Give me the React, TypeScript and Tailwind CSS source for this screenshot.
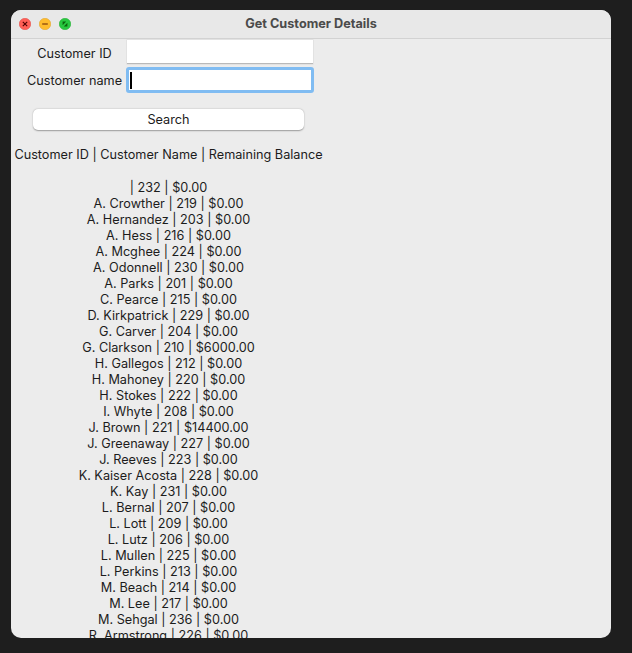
import React from "react";

const rows = [
  "| 232 | $0.00",
  "A. Crowther | 219 | $0.00",
  "A. Hernandez | 203 | $0.00",
  "A. Hess | 216 | $0.00",
  "A. Mcghee | 224 | $0.00",
  "A. Odonnell | 230 | $0.00",
  "A. Parks | 201 | $0.00",
  "C. Pearce | 215 | $0.00",
  "D. Kirkpatrick | 229 | $0.00",
  "G. Carver | 204 | $0.00",
  "G. Clarkson | 210 | $6000.00",
  "H. Gallegos | 212 | $0.00",
  "H. Mahoney | 220 | $0.00",
  "H. Stokes | 222 | $0.00",
  "I. Whyte | 208 | $0.00",
  "J. Brown | 221 | $14400.00",
  "J. Greenaway | 227 | $0.00",
  "J. Reeves | 223 | $0.00",
  "K. Kaiser Acosta | 228 | $0.00",
  "K. Kay | 231 | $0.00",
  "L. Bernal | 207 | $0.00",
  "L. Lott | 209 | $0.00",
  "L. Lutz | 206 | $0.00",
  "L. Mullen | 225 | $0.00",
  "L. Perkins | 213 | $0.00",
  "M. Beach | 214 | $0.00",
  "M. Lee | 217 | $0.00",
  "M. Sehgal | 236 | $0.00",
  "R. Armstrong | 226 | $0.00",
];

function Lights() {
  return (
    <div className="flex items-center gap-[8px] pl-[8px]">
      <svg width="12" height="12" viewBox="0 0 12 12">
        <circle cx="6" cy="6" r="5.75" fill="#ff5f57" stroke="#e0443e" strokeWidth="0.5" />
        <path d="M3.8 3.8 L8.2 8.2 M8.2 3.8 L3.8 8.2" stroke="#4d0000" strokeWidth="1.1" />
      </svg>
      <svg width="12" height="12" viewBox="0 0 12 12">
        <circle cx="6" cy="6" r="5.75" fill="#febc2e" stroke="#dea123" strokeWidth="0.5" />
        <path d="M3.2 6 L8.8 6" stroke="#985712" strokeWidth="1.3" />
      </svg>
      <svg width="12" height="12" viewBox="0 0 12 12">
        <circle cx="6" cy="6" r="5.75" fill="#28c840" stroke="#1aab29" strokeWidth="0.5" />
        <path d="M3.6 3.6 L7.2 3.6 L3.6 7.2 Z M8.4 8.4 L4.8 8.4 L8.4 4.8 Z" fill="#0b650d" />
      </svg>
    </div>
  );
}

export default function App() {
  return (
    <div
      className="w-[632px] h-[653px] bg-[#1e1e1e] pt-[10px] pl-[11px]"
      style={{ fontFamily: "Inter, 'Noto Sans', sans-serif" }}
    >
      <div className="w-[600px] h-[628px] rounded-[10px] overflow-hidden bg-[#ececec] flex flex-col">
        <div className="relative h-[29px] shrink-0 border-b border-[#d2d2d2] bg-[#e8e8e8] flex items-center">
          <Lights />
          <div className="absolute inset-0 flex items-center justify-center text-[12.7px] font-bold text-[#4b4b4b]">
            Get Customer Details
          </div>
        </div>
        <div className="ml-[3px] w-[309px] flex flex-col text-[12.7px] text-[#1c1c1c]">
          <div className="grid grid-cols-[113px_auto] items-center pt-[1px] gap-y-[3px]">
            <div className="text-center pl-[10px] pr-[2px] leading-[16px] pt-[3px]">Customer ID</div>
            <div className="w-[186px] h-[24px] bg-white border-b border-[#b9b9b9] shadow-[0_0_0_0.5px_#d8d8d8]" />
            <div className="text-center pl-[10px] pr-[2px] leading-[16px] pt-[2px]">Customer name</div>
            <div className="-ml-[1px] w-[188px] h-[26px] bg-white border-[3px] border-[#80bcf2] rounded-[3px] flex items-center pl-[1px]">
              <div className="w-[1.5px] h-[17px] bg-black" />
            </div>
          </div>
          <div className="mt-[16px] ml-[19px] w-[271px] h-[21px] bg-white rounded-[5px] shadow-[0_0.5px_1.5px_rgba(0,0,0,0.35)] flex items-center justify-center leading-[16px]">
            Search
          </div>
          <div className="mt-[17px] text-center leading-[16px] whitespace-nowrap">
            <div>Customer ID | Customer Name | Remaining Balance</div>
            <div className="h-[17px]" />
            {rows.map((r) => (
              <div key={r}>{r}</div>
            ))}
          </div>
        </div>
      </div>
    </div>
  );
}
